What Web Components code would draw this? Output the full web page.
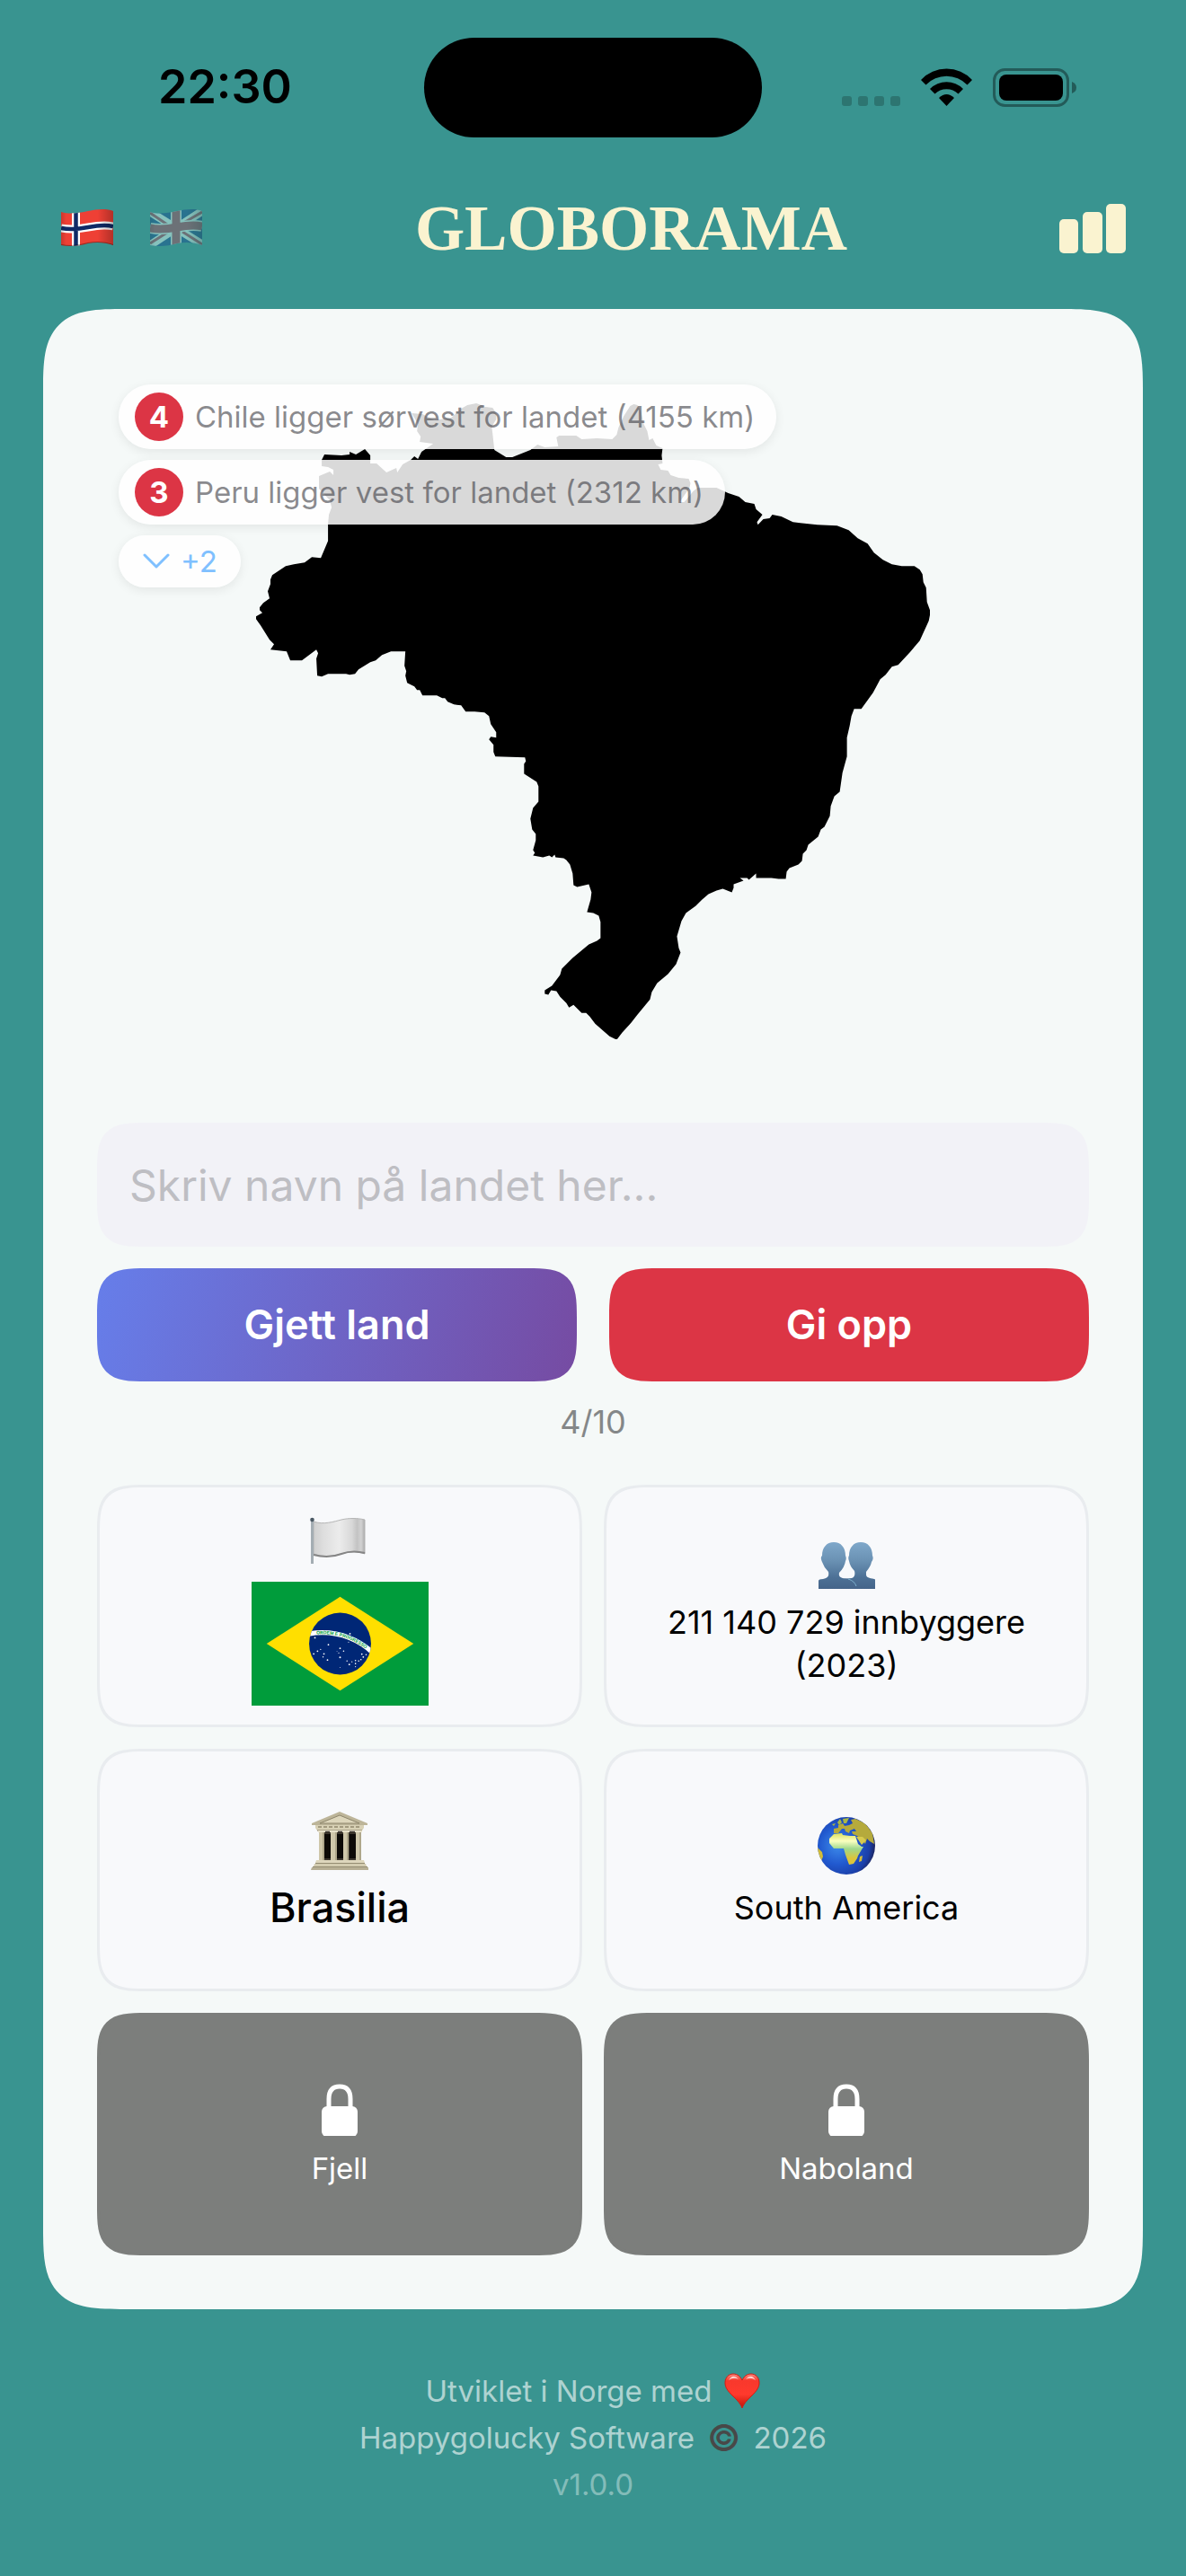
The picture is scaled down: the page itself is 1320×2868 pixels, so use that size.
<!DOCTYPE html>
<html lang="no">
<head>
<meta charset="UTF-8">
<meta name="viewport" content="width=device-width, initial-scale=1.0">
<title>Globorama</title>
<style>
  body {
    margin: 0;
    background: #399490;
    font-family: Inter, "Liberation Sans", sans-serif;
    --radius: 36px;
    --radius-card: 62px;
    --corner: round;
  }
  /* continuous corners where the browser has them */
  @supports (corner-shape: superellipse(1.7)) {
    body {
      --radius: 55px;
      --radius-card: 92px;
      --corner: superellipse(1.7);
    }
  }
</style>
</head>
<body>
<globo-app></globo-app>

<script>
class StatusBar extends HTMLElement {
  connectedCallback() {
    this.attachShadow({ mode: "open" });
    this.shadowRoot.innerHTML = `
      <style>
        :host {
          display: grid;
          grid-template-columns: 1fr auto 1fr;
          align-items: center;
          height: 194px;
        }
        .time {
          padding-left: 176px;
          font-size: 52px;
          font-weight: 600;
          line-height: 60px;
        }
        .island {
          width: 376px;
          height: 111px;
          border-radius: 56px;
          background: #000;
        }
        .icons {
          display: flex;
          align-items: center;
          justify-content: flex-end;
          gap: 23px;
          padding-right: 122px;
        }
        svg { display: block; }
      </style>
      <div class="time">22:30</div>
      <div class="island"></div>
      <div class="icons">
        <svg width="65" height="42" viewBox="0 0 65 42" fill="#2d7571">
          <rect x="0" y="31" width="11" height="11" rx="3"/>
          <rect x="18" y="31" width="11" height="11" rx="3"/>
          <rect x="36" y="31" width="11" height="11" rx="3"/>
          <rect x="54" y="31" width="11" height="11" rx="3"/>
        </svg>
        <svg width="57" height="42" viewBox="0 0 57 42">
          <path d="M0 13A39 39 0 0 1 57 13L51.500 18.500A32 32 0 0 0 5.500 18.500Z"/>
          <path d="M10 23A26 26 0 0 1 47 23L41.500 28.500A19 19 0 0 0 15.500 28.500Z"/>
          <path d="M20 33Q28.500 25 37 33L28.500 42Z"/>
        </svg>
        <svg width="93" height="43" viewBox="0 0 93 43">
          <rect x="1.500" y="1.500" width="82" height="40" rx="12" fill="none" stroke="#235b59" stroke-width="3"/>
          <rect x="7" y="7" width="71" height="29" rx="8"/>
          <path d="M88 15Q93 17 93 21.500T88 28Z" fill="#235b59"/>
        </svg>
      </div>
    `;
  }
}
customElements.define("status-bar", StatusBar);

class GameHeader extends HTMLElement {
  connectedCallback() {
    this.attachShadow({ mode: "open" });
    this.shadowRoot.innerHTML = `
      <style>
        :host {
          display: flex;
          align-items: center;
          justify-content: space-between;
          height: 120px;
          padding: 0 67px;
          margin-bottom: 30px;
        }
        .languages {
          display: flex;
          gap: 39px;
        }
        button {
          display: block;
          padding: 0;
          border: 0;
          background: none;
        }
        .inactive { opacity: 0.5; }
        svg { display: block; }
        h1 {
          margin: 0;
          color: #faf3d0;
          font: bold 71px/84px "Liberation Serif", serif;
        }
      </style>
      <div class="languages">
        <button type="button" aria-label="Norsk">
          <svg width="60" height="44" viewBox="-1 -1 60 44">
            <defs>
              <clipPath id="wave"><path d="M0 3C10 6 20 4 30 2C40 0 50-1 58 2V40C50 37 40 36 30 38C20 41 10 42 0 40Z"/></clipPath>
              <linearGradient id="shade">
                <stop offset="0" stop-color="#000" stop-opacity="0.15"/>
                <stop offset="0.1" stop-color="#000" stop-opacity="0"/>
                <stop offset="0.7" stop-color="#000" stop-opacity="0"/>
                <stop offset="1" stop-color="#000" stop-opacity="0.25"/>
              </linearGradient>
            </defs>
            <g clip-path="url(#wave)">
              <rect width="58" height="44" fill="#ee4035"/>
              <path d="M16.500 0V44M0 21C10 23 20 22 30 20C40 18 50 17 58 19" fill="none" stroke="#fff" stroke-width="9"/>
              <path d="M16.500 0V44M0 21C10 23 20 22 30 20C40 18 50 17 58 19" fill="none" stroke="#0f2a66" stroke-width="4.500"/>
              <rect width="58" height="44" fill="url(#shade)"/>
              <path d="M0 40C10 42 20 41 30 38C40 36 50 37 58 40" fill="none" stroke="#000" stroke-opacity="0.35" stroke-width="2"/>
            </g>
          </svg>
        </button>
        <button type="button" class="inactive" aria-label="English">
          <svg width="60" height="44" viewBox="-1 -1 60 44">
            <g clip-path="url(#wave)">
              <rect width="58" height="44" fill="#1b5490"/>
              <path d="M0 3L58 39M58 2L0 40" stroke="#d3f0ea" stroke-width="9"/>
              <path d="M0 4L25 21M58 3L34 17M0 38L22 24M36 25L58 39" stroke="#a05060" stroke-width="3"/>
              <path d="M29 0V44M0 21C10 23 20 22 30 20C40 18 50 17 58 19" fill="none" stroke="#d3f0ea" stroke-width="12"/>
              <path d="M29 0V44M0 21C10 23 20 22 30 20C40 18 50 17 58 19" fill="none" stroke="#a05060" stroke-width="9"/>
              <rect width="58" height="44" fill="url(#shade)"/>
            </g>
          </svg>
        </button>
      </div>
      <h1>GLOBORAMA</h1>
      <button type="button" aria-label="Statistikk">
        <svg width="74" height="55" viewBox="0 0 74 55" fill="#faf3d0">
          <rect x="0" y="17" width="21" height="38" rx="5"/>
          <rect x="26" y="9" width="22" height="46" rx="5"/>
          <rect x="52" y="0" width="22" height="55" rx="5"/>
        </svg>
      </button>
    `;
  }
}
customElements.define("game-header", GameHeader);

// One earlier guess: number badge + direction text
class GuessPill extends HTMLElement {
  connectedCallback() {
    this.attachShadow({ mode: "open" });
    this.shadowRoot.innerHTML = `
      <style>
        :host {
          display: flex;
          align-items: center;
          gap: 13px;
          height: 72px;
          padding: 0 24px 0 18px;
          border-radius: 36px;
          box-sizing: border-box;
          background: rgba(255, 255, 255, 0.85);
          box-shadow: 0 3px 12px rgba(0, 0, 0, 0.08);
          color: rgba(60, 60, 67, 0.6);
          font-size: 33px;
          line-height: 40px;
          white-space: nowrap;
        }
        .badge {
          width: 54px;
          border-radius: 50%;
          background: #dc3545;
          color: #fff;
          font-weight: 700;
          line-height: 54px;
          text-align: center;
        }
      </style>
      <span class="badge">${this.getAttribute("number")}</span>
      <span><slot></slot></span>
    `;
  }
}
customElements.define("guess-pill", GuessPill);

class CountryMap extends HTMLElement {
  connectedCallback() {
    this.attachShadow({ mode: "open" });
    this.shadowRoot.innerHTML = `
      <style>
        :host {
          display: flex;
          align-items: center;
          justify-content: center;
          position: relative;
          min-height: 798px;
          margin-bottom: 48px;
        }
        .shape {
          display: block;
          width: 68%;
        }
        /* guesses float on top of the silhouette */
        .guesses {
          position: absolute;
          top: 24px;
          left: 24px;
          display: flex;
          flex-direction: column;
          align-items: flex-start;
          gap: 12px;
        }
        button {
          display: flex;
          align-items: center;
          gap: 12px;
          height: 58px;
          padding: 0 26px 0 27px;
          border: 0;
          border-radius: 29px;
          background: rgba(255, 255, 255, 0.85);
          box-shadow: 0 3px 12px rgba(0, 0, 0, 0.08);
          color: #7fc0ff;
          font: 33px/40px Inter, "Liberation Sans", sans-serif;
        }
      </style>
      <svg class="shape" viewBox="285 449 750 708">
        <path d="M285 689L285 686 292 682 289 679 289 676 293 671 300 666 298 658 301 650 301 645 303 640 318 630 327 628 339 626 347 620 357 621
          365 602 365 583 366 573 369 565 367 557 355 544 355 530 367 525 371 529 371 523 365 520 358 519 358 512 361 506 380 507 389 506 389 503
          396 506 406 500 412 507 412 516 419 516 430 526 441 521 442 526 448 517 457 512 461 508 465 511 469 503 482 494 467 492 468 486 464 480
          465 472 458 460 470 461 483 468 502 465 513 455 520 451 530 449 540 453 548 454 552 460 552 467 547 475 548 483 550 501 563 509 570 509
          590 501 598 495 606 498 621 497 619 487 622 485 641 485 647 489 664 488 681 489 686 484 688 476 694 463 701 452 705 450 709 451 713 458
          716 472 720 480 722 490 726 488 730 496 737 499 736 507 737 516 732 517 735 523 743 524 746 529 755 532 766 533 768 538 767 543 756 559
          761 559 771 547 776 543 797 543 810 549 822 553 829 559 839 561 841 567 848 573 842 581 843 584 849 578 856 577 859 573 869 575 882 581
          890 582 909 584 931 585 944 590 954 599 965 605 972 615 982 623 992 628 1003 630 1017 630 1023 634 1026 639 1027 648 1030 654 1031 670
          1035 681 1033 691 1023 713 1012 726 999 740 992 742 985 751 979 756 971 771 958 789 950 789 947 797 945 808 942 821 942 842 937 860
          934 881 928 886 924 897 923 908 917 920 913 923 910 931 899 940 897 946 893 950 892 958 888 962 878 966 875 970 874 978 866 978 858 977
          841 977 841 972 833 979 831 977 823 977 827 980 816 984 816 988 814 993 804 989 797 991 788 995 781 1001 774 1008 763 1016 758 1025
          753 1042 755 1055 757 1060 752 1073 743 1084 731 1094 725 1104 723 1112 709 1129 702 1138 692 1149 686 1157 678 1153 662 1139 656 1131
          652 1127 647 1127 638 1118 633 1121 630 1116 623 1109 619 1103 613 1102 610 1107 606 1106 606 1102 614 1097 623 1085 625 1078 637 1066
          655 1051 664 1047 668 1044 668 1026 666 1019 660 1016 653 1015 657 1001 658 993 655 984 642 987 638 985 637 972 634 962 630 957 627 955
          618 954 617 951 614 954 611 952 604 954 593 952 595 949 593 946 596 935 596 928 592 923 590 911 593 899 599 892 599 875 597 870 583 861
          583 850 585 847 584 843 551 842 549 837 549 829 544 823 546 820 552 821 552 815 546 806 544 797 539 793 528 792 518 792 513 785 505 784
          498 781 495 777 492 777 486 774 470 774 467 768 464 768 461 764 453 760 451 752 452 747 450 741 451 725 435 725 425 729 418 735 412 737
          399 745 395 750 389 751 385 750 365 750 358 753 353 752 352 733 354 727 352 723 336 735 323 735 319 725 301 723 305 717 300 712 290 696Z"/>
      </svg>
      <div class="guesses">
        <slot></slot>
        <button type="button">
          <svg width="30" height="18" viewBox="0 0 30 18" fill="none" stroke="currentColor" stroke-width="3" stroke-linecap="round" stroke-linejoin="round"><path d="M2 2L15 15 28 2"/></svg>
          +2
        </button>
      </div>
    `;
  }
}
customElements.define("country-map", CountryMap);

class GuessForm extends HTMLElement {
  connectedCallback() {
    this.attachShadow({ mode: "open" });
    this.shadowRoot.innerHTML = `
      <style>
        :host { display: block; }
        form {
          display: grid;
          grid-template-columns: 1fr 1fr;
          gap: 24px 36px;
          margin: 0;
        }
        label {
          grid-column: 1 / -1;
          display: block;
        }
        input {
          display: block;
          width: 100%;
          height: 138px;
          padding: 0 36px;
          border: 0;
          border-radius: var(--radius);
          corner-shape: var(--corner);
          box-sizing: border-box;
          background: #f2f2f7;
          color: #000;
          font: 48px/60px Inter, "Liberation Sans", sans-serif;
        }
        input::placeholder { color: #bebec3; opacity: 1; }
        button {
          height: 126px;
          border: 0;
          border-radius: var(--radius);
          corner-shape: var(--corner);
          color: #fff;
          font: 600 45px/54px Inter, "Liberation Sans", sans-serif;
        }
        .guess { background: linear-gradient(105deg, #667eea, #764ba2); }
        .give-up { background: #dc3545; }
        p {
          margin: 20px 0 45px;
          color: #848788;
          font-size: 36px;
          line-height: 50px;
          text-align: center;
        }
      </style>
      <form>
        <label><input type="text" aria-label="Skriv navn på landet" placeholder="Skriv navn på landet her..."></label>
        <button type="button" class="guess">Gjett land</button>
        <button type="button" class="give-up">Gi opp</button>
      </form>
      <p>4/10</p>
    `;
  }
}
customElements.define("guess-form", GuessForm);

const ICONS = {
  flag: `
    <svg width="72" height="72" viewBox="0 0 72 72">
      <defs>
        <linearGradient id="cloth">
          <stop offset="0" stop-color="#cfcfcf"/><stop offset="0.2" stop-color="#dedede"/>
          <stop offset="0.5" stop-color="#ececec"/><stop offset="0.75" stop-color="#d8d8d8"/>
          <stop offset="0.85" stop-color="#c3c3c3"/><stop offset="0.93" stop-color="#d2d2d2"/>
          <stop offset="1" stop-color="#aaa"/>
        </linearGradient>
      </defs>
      <path d="M7 17C18 21 30 17 38 15S56 13 64 15V53C56 50 46 50 38 53S18 57 7 53Z" fill="url(#cloth)" stroke="#b5b5b5"/>
      <path d="M7 54C18 57 30 56 38 53S56 50 64 52" fill="none" stroke="#858585" stroke-width="2"/>
      <path d="M5.500 16V64" stroke="#a4adb3" stroke-width="3"/>
      <circle cx="5.500" cy="15" r="2.300" fill="#4a5863"/>
    </svg>`,
  people: `
    <svg width="72" height="72" viewBox="0 0 72 72">
      <defs>
        <linearGradient id="skin" x1="0" y1="19" x2="0" y2="71" gradientUnits="userSpaceOnUse">
          <stop offset="0" stop-color="#7fa8ca"/><stop offset="0.4" stop-color="#6a91b3"/>
          <stop offset="0.75" stop-color="#4d7196"/><stop offset="1" stop-color="#456489"/>
        </linearGradient>
      </defs>
      <g fill="url(#skin)">
        <path d="M52 19C44 19 39 25 39 34C38 35 38 38 39 40Q40 46 45 51C46 55 45 58 42 59L30 60V71H68V61Q68 60 67 60C61 59 58 58 58 55V52Q63 46 64 41C66 38 66 36 65 34C65 25 60 19 52 19Z"/>
        <path d="M22 19C14 19 9 25 9 34C7 36 8 38 9 41Q11 47 16 52C17 57 15 59 10 60Q5 60 5 62V71H47Q46 61 38 60C30 59 27 58 28 53Q34 47 35 40C36 38 36 36 35 34C35 25 30 19 22 19Z"/>
      </g>
      <path d="M38 60Q45 62 47 68" fill="none" stroke="#7db0cd"/>
    </svg>`,
  museum: `
    <svg width="72" height="72" viewBox="0 0 72 72">
      <path d="M14 26H60V58H14Z" fill="#3b352c"/>
      <path d="M19 29H26V56H19ZM33 29H40V56H33ZM47 29H54V56H47Z" fill="#0d0a07"/>
      <path d="M36 4L67 17V19H5V17Z" fill="#bdb599"/>
      <path d="M36 8L58 17H14Z" fill="#ddd6bb" stroke="#8e866c"/>
      <path d="M9 19H63V22L61 25H11L9 22Z" fill="#d8d1b5"/>
      <path d="M12 21H60" stroke="#a39a7f" stroke-width="2" stroke-dasharray="4 2"/>
      <path d="M11 25H61" stroke="#847b63"/>
      <g fill="#cfc7aa">
        <rect x="13" y="27" width="6" height="31"/><rect x="26" y="27" width="7" height="31"/>
        <rect x="40" y="27" width="6" height="31"/><rect x="54" y="27" width="6" height="31"/>
      </g>
      <path d="M18 27V58M32 27V58M45 27V58M59 27V58" stroke="#8f876d"/>
      <path d="M12 26H20M25 26H34M39 26H47M53 26H61" stroke="#e8e2ca" stroke-width="2"/>
      <path d="M10 58H63L64 61H9Z" fill="#ded7bd"/>
      <path d="M8 62H65L66 65H7Z" fill="#d3ccb0"/>
      <path d="M5 66H68V69H4Z" fill="#b8b095"/>
      <path d="M9 61.500H64M6 65.500H67" stroke="#948c72"/>
    </svg>`,
  globe: `
    <svg width="72" height="72" viewBox="0 0 72 72">
      <defs>
        <radialGradient id="sea" cx="0.350" cy="0.500" r="0.650">
          <stop offset="0" stop-color="#3d8bea"/><stop offset="0.5" stop-color="#2159cf"/>
          <stop offset="0.85" stop-color="#1b3fa8"/><stop offset="1" stop-color="#1c2560"/>
        </radialGradient>
        <linearGradient id="land" x1="0" y1="0" x2="0" y2="1">
          <stop offset="0" stop-color="#dde05a"/><stop offset="0.25" stop-color="#faffc0"/>
          <stop offset="0.5" stop-color="#9fd88c"/><stop offset="0.8" stop-color="#dcc53a"/>
        </linearGradient>
        <clipPath id="ball"><circle cx="36" cy="39" r="32"/></clipPath>
      </defs>
      <circle cx="36" cy="39" r="32" fill="url(#sea)"/>
      <g clip-path="url(#ball)">
        <path d="M22 26L31 25 32 27 40 28 46 28 49 37 53 40 55 40 49 50 48 53 44 59 39 60 35 49 33 42 22 42 17 36 17 31Z" fill="url(#land)"/>
        <path d="M22 25L22 20 27 19 27 16 32 14 34 17 39 16 43 14 41 10 46 9 57 14 65 25 67 37 62 34 59 31 57 37 54 33 48 28 43 26 42 23 47 23 45 20 40 22 39 25 35 23 34 20 31 20 27 25Z" fill="#b5aa3c"/>
        <path d="M47 29L53 38 58 33 54 29Z" fill="#d7ca4e"/>
        <path d="M26 13L29 9 31 13 28 16ZM32 9L39 8 36 14 33 14ZM20 15L24 14 22 17Z" fill="#a9b747"/>
        <path d="M51 51L54 50 53 56 50 57ZM4 41L9 46 10 51 8 56 4 54Z" fill="#d3bd38"/>
      </g>
    </svg>`,
  lock: `
    <svg width="64" height="64" viewBox="0 0 64 64">
      <path d="M20 34V23Q20 9 32 9T44 23V34" fill="none" stroke="#fff" stroke-width="5"/>
      <rect x="12" y="31" width="40" height="34" rx="6" fill="#fff"/>
    </svg>`
};

class ClueTile extends HTMLElement {
  connectedCallback() {
    const locked = this.hasAttribute("locked");
    const tag = locked ? "button" : "div";
    this.attachShadow({ mode: "open" });
    this.shadowRoot.innerHTML = `
      <style>
        :host { display: grid; }
        .tile {
          display: flex;
          flex-direction: column;
          align-items: center;
          justify-content: center;
          gap: 12px;
          min-height: 270px;
          padding: 0 60px;
          border: 3px solid #e9ecef;
          border-radius: var(--radius);
          corner-shape: var(--corner);
          box-sizing: border-box;
          background: #f8f9fb;
          color: #000;
          font: 36px/48px Inter, "Liberation Sans", sans-serif;
          text-align: center;
        }
        button.tile {
          border-color: #7c7e7c;
          background: #7c7e7c;
          color: #fff;
          font-size: 33px;
        }
        :host([large]) .tile {
          font-size: 45px;
          font-weight: 500;
          line-height: 54px;
        }
        svg { display: block; }
      </style>
      <${tag} class="tile"${locked ? ' type="button"' : ""}>
        ${ICONS[this.getAttribute("icon")]}
        <slot></slot>
      </${tag}>
    `;
  }
}
customElements.define("clue-tile", ClueTile);

class BrazilFlag extends HTMLElement {
  connectedCallback() {
    const stars = [
      [716, 633, 9], [868, 712, 9], [745, 785, 9], [780, 765, 6], [818, 815, 9], [702, 815, 9], [808, 850, 7],
      [858, 885, 9], [1000, 753, 9], [1040, 783, 8], [985, 805, 6], [965, 785, 5], [1000, 855, 10], [1112, 588, 9],
      [1096, 682, 6], [1078, 895, 7], [1104, 935, 9], [1134, 905, 6], [1174, 890, 8], [1174, 925, 8],
      [1174, 960, 6], [1210, 895, 8], [1236, 880, 8], [1262, 850, 9], [1246, 818, 9], [1294, 825, 8], [1000, 970, 5]
    ];
    this.attachShadow({ mode: "open" });
    this.shadowRoot.innerHTML = `
      <style>
        :host { display: block; }
        svg { display: block; width: 197px; height: 138px; }
        text { font: bold 52px "Liberation Sans", sans-serif; }
      </style>
      <svg viewBox="0 0 2000 1400">
        <defs>
          <clipPath id="sky"><circle cx="1000" cy="700" r="350"/></clipPath>
          <path id="motto" d="M640 608A808 808 0 0 1 1360 818"/>
        </defs>
        <rect width="2000" height="1400" fill="#009c3b"/>
        <path d="M170 700L1000 170 1830 700 1000 1230Z" fill="#ffdf00"/>
        <circle cx="1000" cy="700" r="350" fill="#002776"/>
        <circle cx="800" cy="1400" r="825" fill="none" stroke="#fff" stroke-width="54" clip-path="url(#sky)"/>
        <text fill="#009c3b" text-anchor="middle"><textPath href="#motto" startOffset="50%">ORDEM E PROGRESSO</textPath></text>
        <g fill="#fff">${stars.map(([x, y, r]) => `<circle cx="${x}" cy="${y}" r="${r}"/>`).join("")}</g>
      </svg>
    `;
  }
}
customElements.define("brazil-flag", BrazilFlag);

class AppFooter extends HTMLElement {
  connectedCallback() {
    this.attachShadow({ mode: "open" });
    this.shadowRoot.innerHTML = `
      <style>
        :host {
          display: block;
          padding: 65px 0 40px;
          color: rgba(255, 255, 255, 0.6);
          font-size: 33px;
          line-height: 52px;
        }
        div {
          display: flex;
          align-items: center;
          justify-content: center;
          gap: 14px;
        }
        .mark {
          color: #484848;
          font-size: 41px;
          font-weight: 500;
        }
        .version { color: rgba(255, 255, 255, 0.4); }
      </style>
      <div>
        <span>Utviklet i Norge med</span>
        <svg width="40" height="40" viewBox="0 0 40 40">
          <defs>
            <linearGradient id="heart" x1="0" y1="0" x2="0" y2="1">
              <stop offset="0" stop-color="#ff8a80"/><stop offset="0.2" stop-color="#f8382c"/>
              <stop offset="0.6" stop-color="#ff3a2d"/><stop offset="1" stop-color="#c01408"/>
            </linearGradient>
          </defs>
          <path d="M20 39Q18 33 9 25C4 20 1 16 1 11C1 5 5 1 10 1C15 1 18 4 20 8C22 4 25 1 30 1C35 1 39 5 39 11C39 16 36 20 31 25Q22 33 20 39Z" fill="url(#heart)" stroke="#d41c12"/>
          <path d="M5 8Q10 0 16 7Q10 4 5 8ZM24 7Q30 0 35 8Q30 4 24 7Z" fill="#ffd9d4"/>
        </svg>
      </div>
      <div><span>Happygolucky Software</span><span class="mark">©</span><span>2026</span></div>
      <div class="version">v1.0.0</div>
    `;
  }
}
customElements.define("app-footer", AppFooter);

class GloboApp extends HTMLElement {
  connectedCallback() {
    this.attachShadow({ mode: "open" });
    this.shadowRoot.innerHTML = `
      <style>
        :host { display: block; }
        main {
          margin: 0 48px;
          padding: 60px;
          border-radius: var(--radius-card);
          corner-shape: var(--corner);
          background: #f5f9f8;
        }
        .clues {
          display: grid;
          grid-template-columns: 1fr 1fr;
          gap: 24px;
        }
      </style>
      <status-bar></status-bar>
      <game-header></game-header>
      <main>
        <country-map>
          <guess-pill number="4">Chile ligger sørvest for landet (4155 km)</guess-pill>
          <guess-pill number="3">Peru ligger vest for landet (2312 km)</guess-pill>
        </country-map>
        <guess-form></guess-form>
        <div class="clues">
          <clue-tile icon="flag"><brazil-flag></brazil-flag></clue-tile>
          <clue-tile icon="people">211 140 729 innbyggere (2023)</clue-tile>
          <clue-tile icon="museum" large>Brasilia</clue-tile>
          <clue-tile icon="globe">South America</clue-tile>
          <clue-tile icon="lock" locked>Fjell</clue-tile>
          <clue-tile icon="lock" locked>Naboland</clue-tile>
        </div>
      </main>
      <app-footer></app-footer>
    `;
  }
}
customElements.define("globo-app", GloboApp);
</script>
</body>
</html>
